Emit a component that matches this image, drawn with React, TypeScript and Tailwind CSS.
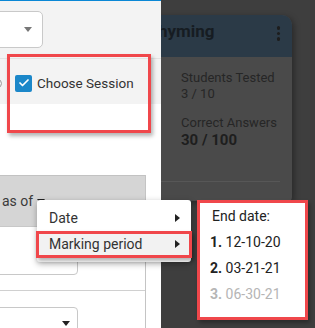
import { Check } from "lucide-react";

function Triangle({ color = "#222" }: { color?: string }) {
  return (
    <span
      className="inline-block w-0 h-0 border-l-[4px] border-r-[4px] border-t-[5px] border-l-transparent border-r-transparent"
      style={{ borderTopColor: color }}
    />
  );
}

function Card() {
  return (
    <div className="pt-[15px] pl-[131px]">
      <div className="w-[161px] rounded-t-[10px] rounded-b-[4px] bg-[#4a4a4a] shadow-[2px_2px_6px_rgba(0,0,0,0.35)] overflow-hidden">
        <div className="h-[42px] bg-[#2b3a47] flex items-start justify-between pl-[16px] pr-[12px] pt-[5px]">
          <span className="text-[17px] leading-[22px] font-bold text-[#161c22]">Rhyming</span>
          <div className="flex flex-col gap-[2px] pt-[6px]">
            <span className="w-[3.5px] h-[3.5px] rounded-full bg-[#1d1d1d]" />
            <span className="w-[3.5px] h-[3.5px] rounded-full bg-[#1d1d1d]" />
            <span className="w-[3.5px] h-[3.5px] rounded-full bg-[#1d1d1d]" />
          </div>
        </div>
        <div className="pl-[50px] pt-[13px] text-[13px] leading-[16px] text-[#262626]">
          <p>Students Tested</p>
          <p>3 / 10</p>
          <p className="mt-[13px]">Correct Answers</p>
          <p className="text-[15px] leading-[18px] font-bold text-[#1e1e1e]">30 / 100</p>
        </div>
        <div className="mt-[32px] mr-[12px] h-px bg-[#575757]" />
        <div className="h-[19px]" />
      </div>
    </div>
  );
}

function Panel() {
  return (
    <div className="absolute left-0 top-0 w-[161px] h-full bg-white flex flex-col overflow-hidden">
      <div className="h-px shrink-0 bg-[#0a87d5]" />
      <div className="h-[57px] shrink-0 bg-[#f3f3f3] pt-[10px]">
        <div className="-ml-[12px] w-[55px] h-[37px] rounded-[5px] border border-[#c9c9c9] bg-white flex items-center justify-end pr-[10px]">
          <Triangle color="#777" />
        </div>
      </div>
      <div className="h-[46px] shrink-0 bg-[#f3f3f3] border-t border-[#e3e3e3] flex items-center pt-[3px]">
        <span className="-ml-[7px] w-[9px] h-[9px] shrink-0 rounded-full border-[1.5px] border-[#9a9a9a]" />
        <span className="ml-[13px] w-[17px] h-[17px] shrink-0 rounded-[2px] bg-[#1b87c9] flex items-center justify-center">
          <Check className="w-[12px] h-[12px] text-white" strokeWidth={3.5} />
        </span>
        <span className="ml-[5px] text-[13.5px] text-[#333]">Choose Session</span>
      </div>
      <div className="h-[71px] shrink-0" />
      <div className="w-[146px] flex-1 border-r border-[#c4c4c4] flex flex-col">
        <div className="h-[51px] shrink-0 bg-[#d5d5d5] border-t border-[#c2c2c2] flex items-center gap-[4px] pl-[2px] text-[14px] text-[#3a3a3a]">
          <span>as of</span>
          <Triangle />
        </div>
        <div className="-ml-[6px] w-[84px] h-[49px] shrink-0 border border-[#c8c8c8] rounded-[4px]" />
        <div className="h-[16px] shrink-0 border-b border-[#d0d0d0]" />
        <div className="h-[16px] shrink-0" />
        <div className="-ml-[6px] w-[84px] h-[40px] shrink-0 border border-[#c8c8c8] rounded-[4px] flex justify-end pr-[7px] pt-[13px]">
          <Triangle />
        </div>
      </div>
    </div>
  );
}

function Menu() {
  return (
    <div className="absolute left-[37px] top-[200px] w-[154px] bg-white rounded-[3px] shadow-[0_2px_6px_rgba(0,0,0,0.3)] py-[5px] text-[14px] text-[#333]">
      <div className="h-[26px] flex items-center justify-between pl-[12px] pr-[11px]">
        <span>Date</span>
        <span className="w-0 h-0 border-y-[4.5px] border-y-transparent border-l-[5px] border-l-[#222]" />
      </div>
      <div className="h-[26px] flex items-center justify-between pl-[12px] pr-[11px] bg-[#f2f2f2]">
        <span>Marking period</span>
        <span className="w-0 h-0 border-y-[4.5px] border-y-transparent border-l-[5px] border-l-[#222]" />
      </div>
    </div>
  );
}

const periods = [
  { n: "1.", date: "12-10-20", muted: false },
  { n: "2.", date: "03-21-21", muted: false },
  { n: "3.", date: "06-30-21", muted: true },
];

function EndDates() {
  return (
    <div className="absolute left-[197px] top-[200px] w-[111px] h-[120px] bg-white border-[3px] border-[#f0474b] shadow-[2px_3px_4px_rgba(0,0,0,0.3)] text-[14px] leading-[26px] text-[#222]">
      <p className="pl-[12px]">End date:</p>
      {periods.map((p) => (
        <p key={p.n} className={p.muted ? "pl-[10px] text-[#b5b5b5]" : "pl-[10px]"}>
          <span className="font-bold">{p.n}</span> {p.date}
        </p>
      ))}
    </div>
  );
}

export default function App() {
  return (
    <div className="relative w-[315px] h-[328px] overflow-hidden bg-[#3e3e3e] font-['Roboto',sans-serif]">
      <Card />
      <Panel />
      <Menu />
      {/* highlight boxes */}
      <div className="absolute left-[7px] top-[54px] w-[144px] h-[79px] border-[3px] border-[#f0474b] shadow-[2px_3px_4px_rgba(0,0,0,0.3)]" />
      <div className="absolute left-[36px] top-[231px] w-[156px] h-[27px] border-[3px] border-[#f0474b] shadow-[2px_3px_4px_rgba(0,0,0,0.3)]" />
      <EndDates />
    </div>
  );
}
